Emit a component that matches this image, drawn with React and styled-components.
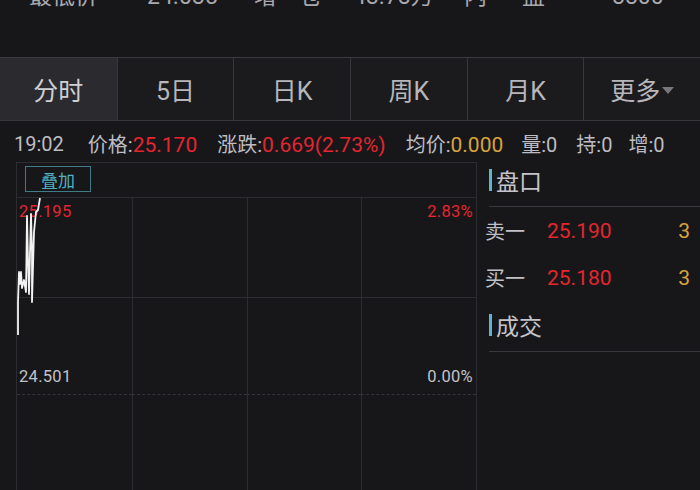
import styled, { createGlobalStyle } from "styled-components";

const GlobalStyle = createGlobalStyle`
  html, body {
    margin: 0;
    padding: 0;
    background: #17171a;
    overflow: hidden;
  }
  * { box-sizing: border-box; }
`;

const RED = "#e3262f";
const GOLD = "#d9a33c";
const GRAY = "#b4b4b9";
const LINE = "#2c2c31";

const Page = styled.div`
  width: 700px;
  height: 490px;
  overflow: hidden;
  display: flex;
  flex-direction: column;
  background: #17171a;
  font-family: Roboto, "Noto Sans CJK SC", sans-serif;
  color: ${GRAY};
`;

const StatsRow = styled.div`
  display: grid;
  grid-template-columns: 118px 107px 45px 54px 111px 58px 90px auto;
  padding-left: 29px;
  margin-top: -19px;
  height: 32px;
  flex-shrink: 0;
  font-size: 23px;
  line-height: 32px;
  color: #a8a8ad;
  white-space: nowrap;
`;

const Tabs = styled.div`
  margin-top: 44px;
  height: 64px;
  flex-shrink: 0;
  display: grid;
  grid-template-columns: repeat(6, 1fr);
  border-top: 1px solid #3a3a3f;
  border-bottom: 1px solid #3a3a3f;
  background: #1b1b1e;
`;

const Tab = styled.div`
  display: flex;
  align-items: center;
  justify-content: center;
  gap: 2px;
  font-size: 25px;
  color: ${(p) => (p.$active ? "#d0d0d4" : "#b6b6bb")};
  background: ${(p) => (p.$active ? "#2b2b2f" : "transparent")};
  border-left: ${(p) => (p.$first ? "none" : "1px solid #37373c")};
`;

const Caret = styled.span`
  width: 0;
  height: 0;
  border-left: 6px solid transparent;
  border-right: 6px solid transparent;
  border-top: 7px solid #77777c;
  margin-top: 2px;
`;

const InfoRow = styled.div`
  display: flex;
  align-items: center;
  height: 41px;
  flex-shrink: 0;
  padding: 4px 0 0 14px;
  font-size: 20px;
  white-space: nowrap;
`;

const InfoItem = styled.span`
  margin-right: ${(p) => p.$gap}px;
  color: #bdbdc2;
`;

const Val = styled.span`
  font-size: 21px;
  color: ${(p) => p.$color};
`;

const Body = styled.div`
  flex: 1;
  display: flex;
  padding-left: 16px;
  min-height: 0;
`;

const Chart = styled.div`
  width: 461px;
  border-top: 1px solid ${LINE};
  border-left: 1px solid ${LINE};
  border-right: 1px solid ${LINE};
  display: flex;
  flex-direction: column;
`;

const ChartHead = styled.div`
  height: 34px;
  flex-shrink: 0;
  display: flex;
  align-items: flex-start;
  padding: 3px 0 0 8px;
`;

const OverlayBtn = styled.div`
  width: 66px;
  height: 26px;
  border: 1px solid #3f7c87;
  color: #4fb0c4;
  font-size: 17px;
  display: flex;
  align-items: center;
  justify-content: center;
  font-family: "Noto Sans CJK SC", sans-serif;
`;

const Plot = styled.div`
  position: relative;
  flex: 1;
  min-height: 0;
  display: grid;
  grid-template-columns: repeat(4, 1fr);
  grid-template-rows: 100px 97px 1fr;
  border-top: 1px solid ${LINE};
`;

const Cell = styled.div`
  border-left: ${(p) => (p.$first ? "none" : `1px solid ${LINE}`)};
  border-bottom: ${(p) =>
    p.$dashed ? `1px dashed #34343a` : p.$line ? `1px solid ${LINE}` : "none"};
`;

const AxisLabel = styled.span`
  position: absolute;
  font-size: 16.5px;
  letter-spacing: 0.3px;
  color: ${(p) => p.$color};
  top: ${(p) => p.$top}px;
  ${(p) => (p.$right ? "right: 3px;" : "left: 2px;")}
`;

const PriceLine = styled.svg`
  position: absolute;
  left: 0;
  top: 0;
  overflow: visible;
`;

const Side = styled.div`
  flex: 1;
  display: flex;
  flex-direction: column;
`;

const SectionTitle = styled.div`
  display: flex;
  align-items: center;
  align-self: stretch;
  gap: 4px;
  height: 45px;
  flex-shrink: 0;
  margin: ${(p) => p.$mt || 0}px 0 0 12px;
  padding-bottom: 8px;
  font-size: 23px;
  color: #c4c4c9;
  font-family: "Noto Sans CJK SC", sans-serif;
  border-bottom: 1px solid #38383d;
`;

const Bar = styled.span`
  width: 3px;
  height: 22px;
  background: #5ab7cf;
`;

const QuoteRow = styled.div`
  display: flex;
  align-items: center;
  height: 47px;
  flex-shrink: 0;
  padding: 0 10px 0 8px;
  font-size: 21px;
`;

const QuoteLabel = styled.span`
  width: 62px;
  font-size: 20px;
  color: #c0c0c5;
  font-family: "Noto Sans CJK SC", sans-serif;
`;

const QuotePrice = styled.span`
  flex: 1;
  color: ${RED};
`;

const QuoteQty = styled.span`
  color: ${GOLD};
`;

const stats = ["最低价", "24.085", "增", "仓", "43.78万", "内", "盘", "8800"];
const tabs = ["分时", "5日", "日K", "周K", "月K"];
const pricePath =
  "1,137 1,104 2,74 3,86 4,74 5,90 7,82 9,94 10,18 11,62 12,96 14,16 15,54 15,104 17,34 19,14 21,12 23,0";

function App() {
  return (
    <Page>
      <GlobalStyle />
      <StatsRow>
        {stats.map((s, i) => (
          <span key={i}>{s}</span>
        ))}
      </StatsRow>
      <Tabs>
        {tabs.map((t, i) => (
          <Tab key={t} $active={i === 0} $first={i === 0}>
            {t}
          </Tab>
        ))}
        <Tab>
          更多
          <Caret />
        </Tab>
      </Tabs>
      <InfoRow>
        <InfoItem $gap={24}>19:02</InfoItem>
        <InfoItem $gap={20}>
          价格:<Val $color={RED}>25.170</Val>
        </InfoItem>
        <InfoItem $gap={20}>
          涨跌:<Val $color={RED}>0.669(2.73%)</Val>
        </InfoItem>
        <InfoItem $gap={18}>
          均价:<Val $color={GOLD}>0.000</Val>
        </InfoItem>
        <InfoItem $gap={19}>量:0</InfoItem>
        <InfoItem $gap={16}>持:0</InfoItem>
        <InfoItem $gap={0}>增:0</InfoItem>
      </InfoRow>
      <Body>
        <Chart>
          <ChartHead>
            <OverlayBtn>叠加</OverlayBtn>
          </ChartHead>
          <Plot>
            {Array.from({ length: 12 }).map((_, i) => (
              <Cell
                key={i}
                $first={i % 4 === 0}
                $line={i < 4}
                $dashed={i >= 4 && i < 8}
              />
            ))}
            <AxisLabel $color={RED} $top={4}>
              25.195
            </AxisLabel>
            <AxisLabel $color={RED} $top={4} $right>
              2.83%
            </AxisLabel>
            <AxisLabel $color="#c2c2c6" $top={169}>
              24.501
            </AxisLabel>
            <AxisLabel $color="#c2c2c6" $top={169} $right>
              0.00%
            </AxisLabel>
            <PriceLine width="30" height="140">
              <polyline
                points={pricePath}
                fill="none"
                stroke="#f2f2f2"
                strokeWidth="1.8"
                strokeLinejoin="round"
              />
            </PriceLine>
          </Plot>
        </Chart>
        <Side>
          <SectionTitle>
            <Bar />
            盘口
          </SectionTitle>
          <QuoteRow>
            <QuoteLabel>卖一</QuoteLabel>
            <QuotePrice>25.190</QuotePrice>
            <QuoteQty>3</QuoteQty>
          </QuoteRow>
          <QuoteRow>
            <QuoteLabel>买一</QuoteLabel>
            <QuotePrice>25.180</QuotePrice>
            <QuoteQty>3</QuoteQty>
          </QuoteRow>
          <SectionTitle $mt={6}>
            <Bar />
            成交
          </SectionTitle>
        </Side>
      </Body>
    </Page>
  );
}

export default App;
